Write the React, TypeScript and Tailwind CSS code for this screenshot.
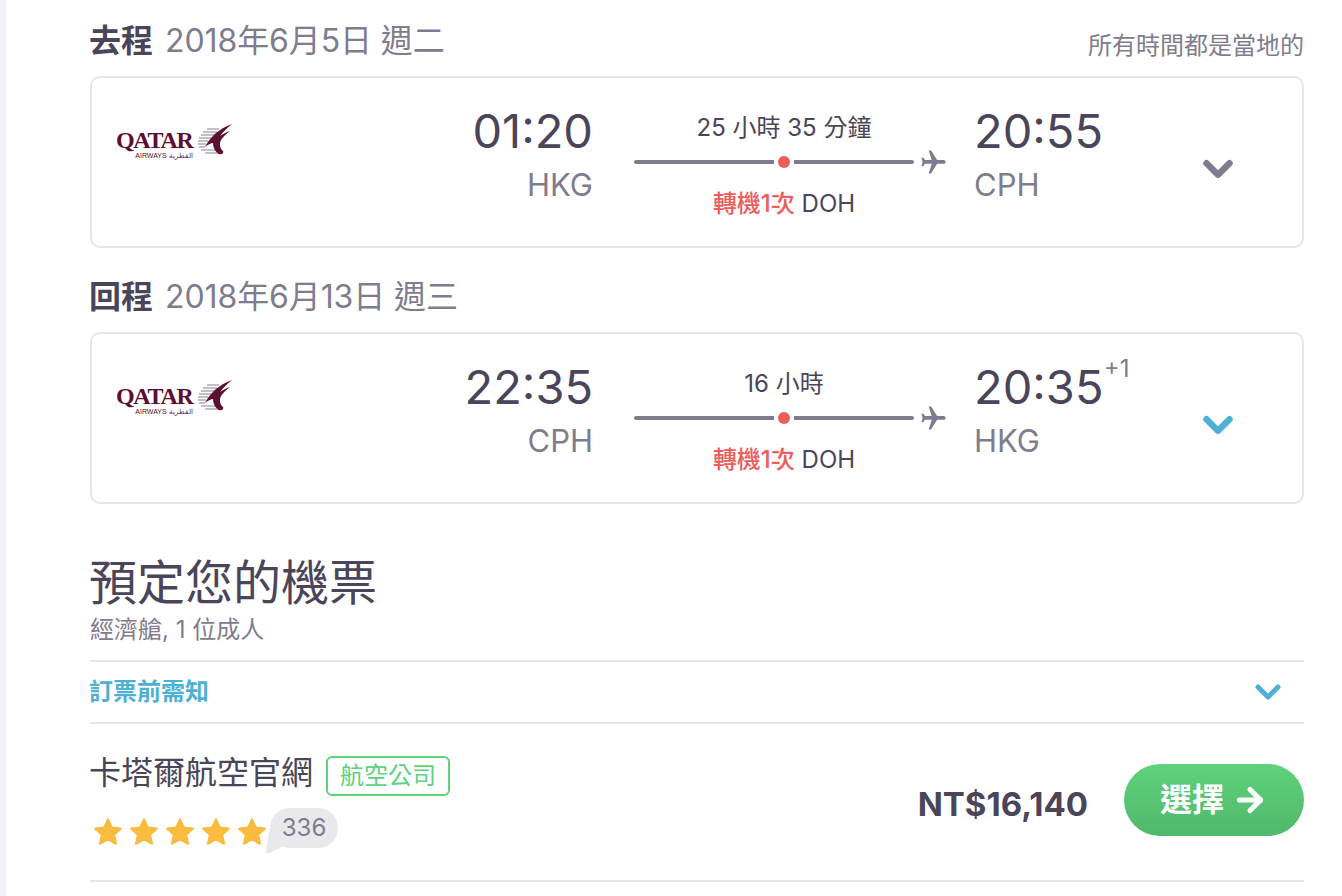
import { ArrowRight, ChevronDown } from 'lucide-react';
import { MdFlight } from 'react-icons/md';

const FONT = 'font-["Inter","Noto_Sans_CJK_TC",sans-serif]';

interface Leg {
  title: string;
  date: string;
  depart: string;
  from: string;
  duration: string;
  arrive: string;
  to: string;
  plusDay?: boolean;
  chevron: string;
}

const legs: Leg[] = [
  {
    title: '去程',
    date: '2018年6月5日 週二',
    depart: '01:20',
    from: 'HKG',
    duration: '25 小時 35 分鐘',
    arrive: '20:55',
    to: 'CPH',
    chevron: 'text-[#7f7c8d]',
  },
  {
    title: '回程',
    date: '2018年6月13日 週三',
    depart: '22:35',
    from: 'CPH',
    duration: '16 小時',
    arrive: '20:35',
    to: 'HKG',
    plusDay: true,
    chevron: 'text-[#4fb0d6]',
  },
];

function QatarLogo() {
  return (
    <div className="flex items-start">
      <div className="flex flex-col items-end">
        <span className='font-["Liberation_Serif",serif] text-[24px] leading-[24px] font-bold tracking-[-1.3px] text-[#5c0f32]'>QATAR</span>
        <span className='font-["Liberation_Sans",sans-serif] text-[7px] leading-[8px] text-[#5c0f32]'>AIRWAYS القطرية</span>
      </div>
      <svg width="34" height="32" viewBox="0 0 34 32" className="-mt-[4px] ml-[5px]">
        <g stroke="#aeacb2" strokeWidth="1.3">
          <path d="M9 5h12M5 8h14M3 11h14M1 14h12M0 17h10M0 20h8M1 23h6M3 26h18M7 29h16" />
        </g>
        <path
          d="M34 0C26 3 18 8 14 13c-3 3-5 6-7 10 4-3 6-4 8-4 0 4 2 9 6 11 3 1 5-1 4-3-3-2-4-7-2-11 2-3 5-6 9-9-4 1-7 3-10 5 3-4 7-8 12-12z"
          fill="#5c0f32"
        />
      </svg>
    </div>
  );
}

function LegCard({ leg }: { leg: Leg }) {
  return (
    <div className="flex h-[172px] items-start rounded-[10px] border-2 border-[#e6e6eb] pl-[24px]">
      <div className="w-[340px] pt-[50px]">
        <QatarLogo />
      </div>
      <div className="w-[137px] pt-[24px] text-right">
        <div className="text-[47px] leading-[58px] text-[#4a4559]">{leg.depart}</div>
        <div className="mt-[2px] text-[31px] leading-[46px] text-[#7f7c8d]">{leg.from}</div>
      </div>
      <div className="ml-[41px] w-[314px] pt-[32px]">
        <div className="w-[300px] text-center text-[24px] leading-[36px] text-[#4a4559]">{leg.duration}</div>
        <div className="flex h-[32px] items-center">
          <div className="h-[4px] w-[140px] rounded-l-full bg-[#7f7c8d]" />
          <div className="mx-[4px] size-[12px] rounded-full bg-[#ee5d5d]" />
          <div className="h-[4px] w-[120px] rounded-r-full bg-[#7f7c8d]" />
          <MdFlight className="ml-[5px] shrink-0 rotate-90 text-[#7f7c8d]" size={29} />
        </div>
        <div className="mt-[8px] w-[300px] text-center text-[24px] leading-[36px]">
          <span className="font-medium text-[#ee5d5d]">轉機1次</span>
          <span className="text-[#4a4559]"> DOH</span>
        </div>
      </div>
      <div className="ml-[26px] w-[221px] pt-[24px]">
        <div className="relative w-fit text-[47px] leading-[58px] text-[#4a4559]">
          {leg.arrive}
          {leg.plusDay && <span className="absolute -top-[1px] -right-[26px] text-[24px] leading-none text-[#7f7c8d]">+1</span>}
        </div>
        <div className="mt-[2px] text-[31px] leading-[46px] text-[#7f7c8d]">{leg.to}</div>
      </div>
      <ChevronDown className={`mt-[68px] shrink-0 ${leg.chevron}`} size={46} strokeWidth={3.4} />
    </div>
  );
}

function Star() {
  return (
    <svg width="32" height="32" viewBox="0 0 24 24" fill="#f9bc3f" stroke="#f9bc3f" strokeWidth="1.6" strokeLinejoin="round">
      <path d="M12 2.500l2.900 6.200 6.700.8-5 4.600 1.400 6.700-6-3.400-6 3.400 1.400-6.700-5-4.600 6.700-.8z" />
    </svg>
  );
}

export default function App() {
  return (
    <div className={`flex min-h-[896px] bg-white ${FONT}`}>
      <div className="w-[6px] shrink-0 bg-[#f2f1f5]" />
      <div className="ml-[84px] w-[1214px]">
        {legs.map((leg, i) => (
          <section key={leg.title} className={i === 0 ? 'pt-[17px]' : 'pt-[25px]'}>
            <div className="mb-[11px] flex h-[48px] items-center justify-between">
              <div className="-ml-[1px] text-[32px] leading-[48px]">
                <span className="font-bold text-[#4a4559]">{leg.title}</span>
                <span className="ml-[12px] tracking-[-0.1px] text-[#7f7c8d]">{leg.date}</span>
              </div>
              {i === 0 && <span className="mt-[10px] text-[24px] text-[#7f7c8d]">所有時間都是當地的</span>}
            </div>
            <LegCard leg={leg} />
          </section>
        ))}

        <h2 className="mt-[46px] -ml-[1px] text-[48px] leading-[66px] text-[#4a4559]">預定您的機票</h2>
        <p className="text-[24px] leading-[28px] text-[#7f7c8d]">經濟艙, 1 位成人</p>

        <div className="mt-[16px] flex h-[64px] items-center justify-between border-y-2 border-[#e6e6eb]">
          <span className="-ml-[1px] text-[24px] font-bold text-[#4fb0d6]">訂票前需知</span>
          <ChevronDown className="mr-[16px] text-[#4fb0d6]" size={40} strokeWidth={3} />
        </div>

        <div className="flex h-[158px] items-start justify-between border-b-2 border-[#e6e6eb]">
          <div className="pt-[27px]">
            <div className="flex h-[44px] items-center">
              <span className="-ml-[1px] text-[32px] leading-[44px] text-[#4a4559]">卡塔爾航空官網</span>
              <span className="mt-[6px] ml-[13px] flex h-[40px] w-[124px] items-center justify-center rounded-[6px] border-2 border-[#5ed27c] text-[24px] text-[#5ed27c]">航空公司</span>
            </div>
            <div className="mt-[21px] flex items-center pl-[2px]">
              <div className="flex gap-[4px]">
                <Star />
                <Star />
                <Star />
                <Star />
                <Star />
              </div>
              <div className="relative -mt-[8px] ml-[2px] flex h-[40px] w-[68px] items-center justify-center rounded-[20px] bg-[#e9e8ed] text-[24px] text-[#7f7c8d]">
                336
                {/* speech bubble tail */}
                <svg width="16" height="26" viewBox="0 0 16 26" className="absolute -bottom-[6px] -left-[4px]">
                  <path d="M4 0L0 22c-.3 2.500 1.500 4 3.500 3L16 19V0z" fill="#e9e8ed" />
                </svg>
              </div>
            </div>
          </div>
          <div className="flex items-center pt-[40px]">
            <span className="mt-[10px] text-[33px] font-bold text-[#4a4559]">NT$16,140</span>
            <button className="ml-[36px] flex h-[72px] w-[180px] items-center justify-center gap-[8px] rounded-full bg-gradient-to-b from-[#5fd27b] to-[#50b86c] text-[32px] font-bold text-white">
              選擇
              <ArrowRight size={36} strokeWidth={3.4} />
            </button>
          </div>
        </div>
      </div>
    </div>
  );
}
